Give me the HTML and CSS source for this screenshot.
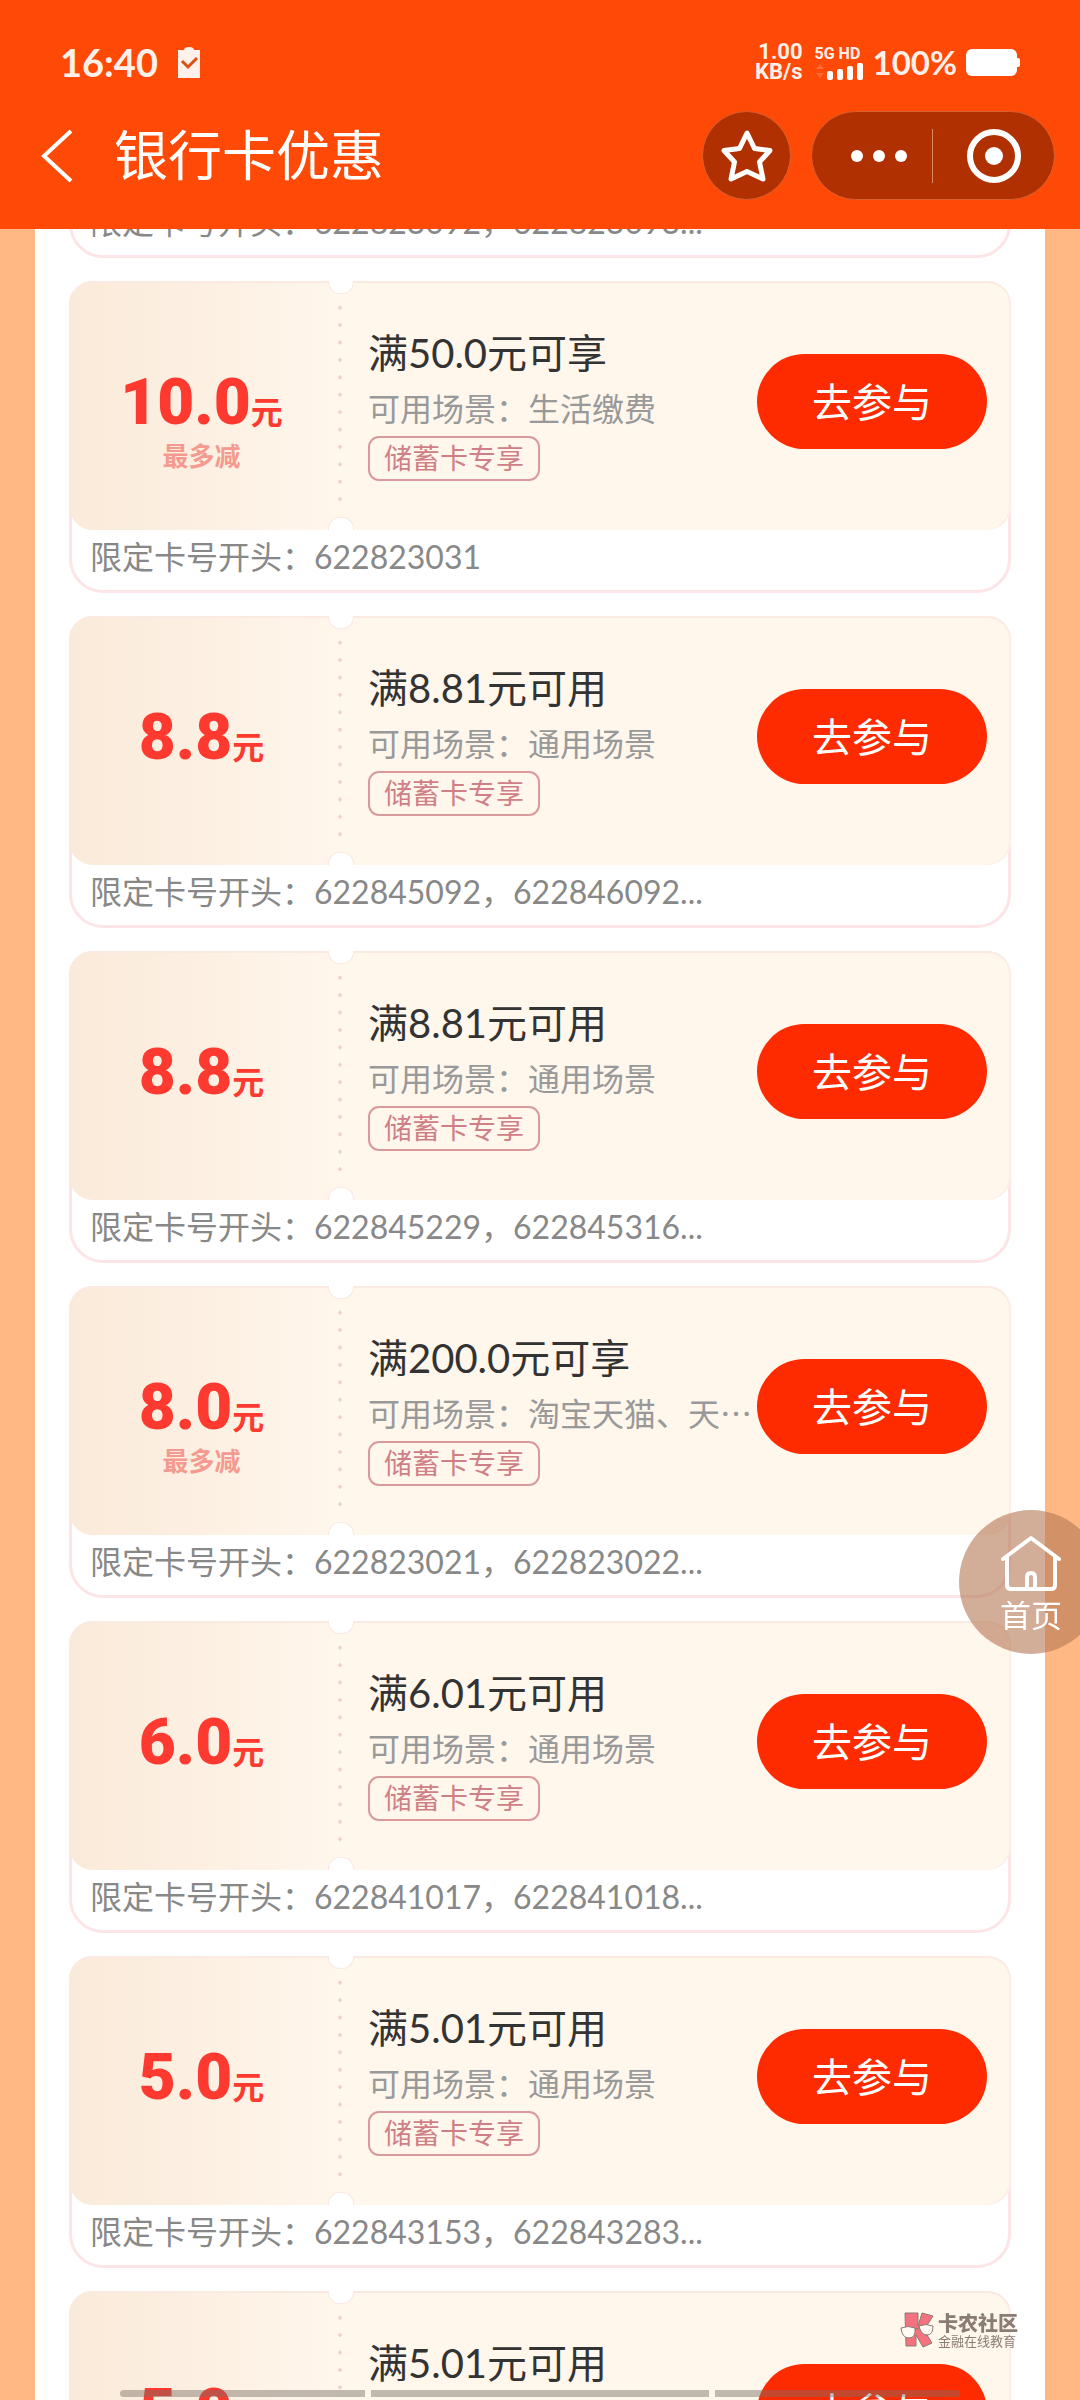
FILE: index.html
```html
<!DOCTYPE html>
<html lang="zh-CN">
<head>
    <meta charset="UTF-8">
    <meta name="viewport" content="width=device-width, initial-scale=1.0">
    <title>银行卡优惠</title>
    <link rel="stylesheet" href="styles.css">
</head>
<body>
    <header class="header">
        <div class="status">
            <span class="time">16:40</span>
            <svg class="clipboard" width="22" height="31" viewBox="0 0 22 31">
                <path d="M0 3h6c0-2 2-3 5-3s5 1 5 3h6v28H0z" fill="#fff1ea"/>
                <path d="M4 14l6 6 9-9" fill="none" stroke="#d9510f" stroke-width="3"/>
            </svg>
            <div class="speed"><span>1.00</span><span>KB/s</span></div>
            <div class="signal">
                <span>5G HD</span>
                <svg width="48" height="17" viewBox="0 0 48 17">
                    <path d="M1 6l4-5 4 5zM1 10l4 5 4-5z" fill="#ff6a35"/>
                    <g fill="#fff">
                        <rect x="12" y="8" width="6" height="9" rx="2"/>
                        <rect x="22" y="6" width="6" height="11" rx="2"/>
                        <rect x="32" y="3" width="6" height="14" rx="2"/>
                        <rect x="42" y="0" width="6" height="17" rx="2"/>
                    </g>
                </svg>
            </div>
            <span class="percent">100%</span>
            <svg class="battery" width="54" height="27" viewBox="0 0 54 27">
                <rect width="51" height="27" rx="6" fill="#fff"/>
                <rect x="48" y="9" width="6" height="9" rx="2" fill="#fff"/>
            </svg>
        </div>
        <nav class="nav">
            <button class="back" aria-label="返回">
                <svg width="32" height="54" viewBox="0 0 32 54"><path d="M30 2L3 27l27 25" fill="none" stroke="#fff" stroke-width="4"/></svg>
            </button>
            <h1>银行卡优惠</h1>
            <button class="round" aria-label="收藏">
                <svg width="52" height="54" viewBox="0 0 52 54">
                    <path d="M26 4l7.500 15.500L49 21.500 38.500 33l3.500 17-16-7.500L10 50l3.500-17L3 21.500l15.500-2z" fill="none" stroke="#fff" stroke-width="5" stroke-linejoin="round"/>
                </svg>
            </button>
            <div class="capsule">
                <button class="more" aria-label="更多">
                    <svg width="58" height="14" viewBox="0 0 58 14" fill="#fff"><circle cx="7" cy="7" r="6"/><circle cx="29" cy="7" r="6"/><circle cx="51" cy="7" r="6"/></svg>
                </button>
                <button class="close" aria-label="关闭">
                    <svg width="54" height="54" viewBox="0 0 54 54"><circle cx="27" cy="27" r="24" fill="none" stroke="#fff" stroke-width="6"/><circle cx="27" cy="27" r="9" fill="#fff"/></svg>
                </button>
            </div>
        </nav>
    </header>

    <main class="panel">
        <section class="card">
            <p class="limit">限定卡号开头：622823092，622823093...</p>
        </section>

        <section class="card">
            <div class="ticket">
                <div class="amount"><p><b>10.0</b>元</p><small>最多减</small></div>
                <div class="dots"></div>
                <div class="info">
                    <h2>满50.0元可享</h2>
                    <p>可用场景：生活缴费</p>
                    <span class="tag">储蓄卡专享</span>
                </div>
                <button class="join">去参与</button>
            </div>
            <p class="limit">限定卡号开头：622823031</p>
        </section>

        <section class="card">
            <div class="ticket">
                <div class="amount"><p><b>8.8</b>元</p></div>
                <div class="dots"></div>
                <div class="info">
                    <h2>满8.81元可用</h2>
                    <p>可用场景：通用场景</p>
                    <span class="tag">储蓄卡专享</span>
                </div>
                <button class="join">去参与</button>
            </div>
            <p class="limit">限定卡号开头：622845092，622846092...</p>
        </section>

        <section class="card">
            <div class="ticket">
                <div class="amount"><p><b>8.8</b>元</p></div>
                <div class="dots"></div>
                <div class="info">
                    <h2>满8.81元可用</h2>
                    <p>可用场景：通用场景</p>
                    <span class="tag">储蓄卡专享</span>
                </div>
                <button class="join">去参与</button>
            </div>
            <p class="limit">限定卡号开头：622845229，622845316...</p>
        </section>

        <section class="card">
            <div class="ticket">
                <div class="amount"><p><b>8.0</b>元</p><small>最多减</small></div>
                <div class="dots"></div>
                <div class="info">
                    <h2>满200.0元可享</h2>
                    <p>可用场景：淘宝天猫、天…</p>
                    <span class="tag">储蓄卡专享</span>
                </div>
                <button class="join">去参与</button>
            </div>
            <p class="limit">限定卡号开头：622823021，622823022...</p>
        </section>

        <section class="card">
            <div class="ticket">
                <div class="amount"><p><b>6.0</b>元</p></div>
                <div class="dots"></div>
                <div class="info">
                    <h2>满6.01元可用</h2>
                    <p>可用场景：通用场景</p>
                    <span class="tag">储蓄卡专享</span>
                </div>
                <button class="join">去参与</button>
            </div>
            <p class="limit">限定卡号开头：622841017，622841018...</p>
        </section>

        <section class="card">
            <div class="ticket">
                <div class="amount"><p><b>5.0</b>元</p></div>
                <div class="dots"></div>
                <div class="info">
                    <h2>满5.01元可用</h2>
                    <p>可用场景：通用场景</p>
                    <span class="tag">储蓄卡专享</span>
                </div>
                <button class="join">去参与</button>
            </div>
            <p class="limit">限定卡号开头：622843153，622843283...</p>
        </section>

        <section class="card">
            <div class="ticket">
                <div class="amount"><p><b>5.0</b>元</p></div>
                <div class="dots"></div>
                <div class="info">
                    <h2>满5.01元可用</h2>
                </div>
                <button class="join">去参与</button>
            </div>
        </section>
    </main>

    <a class="home" href="#">
        <svg width="60" height="56" viewBox="0 0 60 56" fill="none" stroke="#fff" stroke-width="4" stroke-linecap="round" stroke-linejoin="round">
            <path d="M2 24L30 3l28 21"/>
            <path d="M6 22v28q0 4 4 4h40q4 0 4-4V22"/>
            <path d="M26 53V42q0-4 4-4t4 4v11"/>
        </svg>
        <span>首页</span>
    </a>

    <div class="watermark">
        <svg width="34" height="36" viewBox="0 0 34 36" stroke="#8a7a72" stroke-width="1">
            <path d="M5 1h13v13l4-13 11 3-9 14 8 13-9 4-7-12v11H6z" fill="#f4727f"/>
            <path d="M1 16q7-3 14 0 1 10-6 10T1 16zM19 14q7-3 14 0 0 9-6 9t-8-9z" fill="#fffaf3"/>
            <path d="M15 17l4-1" fill="none"/>
        </svg>
        <div>
            <strong>卡农社区</strong>
            <span>金融在线教育</span>
        </div>
    </div>

    <div class="gesture"><i></i><i></i><i></i></div>
</body>
</html>
```

FILE: styles.css
```css
* {
    box-sizing: border-box;
}
body {
    margin: 0;
    height: 100vh;
    display: flex;
    flex-direction: column;
    overflow: hidden;
    background: #ffb884;
    font-family: Lato, "Noto Sans CJK SC", sans-serif;
}
h1, h2, p {
    margin: 0;
    font-weight: normal;
}
button {
    border: none;
    padding: 0;
    background: none;
    color: inherit;
    font-family: inherit;
    cursor: pointer;
}
svg {
    display: block;
    flex: none;
}

/* header */
.header {
    position: relative;
    z-index: 1;
    flex: none;
    height: 229px;
    padding: 42px 25px 0 41px;
    background: #ff4906;
    color: #fff;
}
.status {
    display: flex;
    align-items: center;
    height: 40px;
    padding: 0 35px 0 19px;
    font-weight: bold;
    color: #fff1ea;
}
.time {
    font-size: 38px;
}
.clipboard {
    margin-left: 20px;
}
.speed {
    margin-left: auto;
    display: flex;
    flex-direction: column;
    text-align: right;
    font-family: Roboto, sans-serif;
    font-size: 22px;
    line-height: 20px;
}
.signal {
    margin: 0 10px 0 12px;
    font-family: Roboto, sans-serif;
    font-size: 16px;
    line-height: 18px;
}
.percent {
    font-size: 33px;
}
.battery {
    margin-left: 9px;
}
.nav {
    display: flex;
    align-items: center;
    height: 89px;
    margin-top: 29px;
}
.nav h1 {
    margin: 0 auto 0 41px;
    font-size: 54px;
    line-height: 60px;
}
.round,
.capsule {
    height: 89px;
    border: 1px solid #d9602f;
    border-radius: 45px;
    background: #b03002;
}
.round {
    display: flex;
    align-items: center;
    justify-content: center;
    width: 89px;
    margin-right: 20px;
}
.capsule {
    display: flex;
    align-items: center;
    width: 244px;
}
.capsule button {
    width: 50%;
    height: 54px;
    display: flex;
    align-items: center;
}
.more {
    justify-content: flex-end;
    padding-right: 24px;
    border-right: 1px solid #d98a62;
}
.close {
    justify-content: center;
}

/* coupon list */
.panel {
    flex: 1;
    min-height: 0;
    margin: -37px 35px 0;
    padding: 0 34px;
    background: #fff;
}
.card {
    margin-bottom: 23px;
    border: 3px solid #fde4e6;
    border-radius: 24px 24px 34px 34px;
}
.ticket {
    position: relative;
    display: flex;
    align-items: flex-start;
    height: 249px;
    margin: -3px -3px 0;
    padding-right: 24px;
    border-radius: 24px;
    background: linear-gradient(90deg, #faead9, #fff6ec 270px);
    box-shadow: inset 0 2px #fbeae2, inset -2px 0 #fdeee8;
}
.amount {
    width: 269px;
    padding: 82px 4px 0 0;
    text-align: center;
    font-size: 32px;
    font-weight: bold;
    color: #fe3a30;
}
.amount p {
    font-weight: bold;
    line-height: 80px;
}
.amount b {
    font-family: Roboto, sans-serif;
    font-size: 64px;
}
.amount small {
    display: block;
    margin-top: -12px;
    font-size: 26px;
    line-height: 32px;
    color: #f59a8f;
}
.dots {
    width: 4px;
    height: 209px;
    margin-top: 18px;
    background: radial-gradient(circle, #edd5cd 2px, transparent 2px) 0 0 / 4px 17px round;
}
/* notches on the tear line */
.dots::before,
.dots::after {
    content: "";
    position: absolute;
    left: 259px;
    width: 24px;
    height: 12px;
    border: 1px solid #f8e8e4;
    background: #fff;
}
.dots::before {
    top: 0;
    border-top: none;
    border-radius: 0 0 12px 12px;
}
.dots::after {
    bottom: 0;
    border-bottom: none;
    border-radius: 12px 12px 0 0;
}
.info {
    flex: 1;
    padding: 44px 0 0 26px;
    white-space: nowrap;
}
.info h2 {
    font-size: 40px;
    line-height: 56px;
    color: #333;
}
.info p {
    font-family: "Noto Sans CJK SC", sans-serif;
    font-size: 32px;
    line-height: 52px;
    padding-bottom: 3px;
    color: #999;
}
.tag {
    display: inline-block;
    padding: 0 14px;
    border: 2px solid #d99a9c;
    border-radius: 11px;
    font-size: 28px;
    line-height: 41px;
    color: #cf8086;
}
.join {
    flex: none;
    width: 230px;
    height: 95px;
    margin-top: 73px;
    padding-bottom: 4px;
    border-radius: 48px;
    background: #ff2b00;
    color: #fff;
    font-size: 40px;
}
.limit {
    height: 60px;
    padding-left: 18px;
    font-size: 32px;
    line-height: 54px;
    color: #888;
}

/* floating home link */
.home {
    position: fixed;
    right: -23px;
    top: 1510px;
    width: 144px;
    height: 144px;
    padding-top: 25px;
    border-radius: 50%;
    background: rgba(180, 118, 83, 0.6);
    display: flex;
    flex-direction: column;
    align-items: center;
    color: #fff;
    font-size: 31px;
    line-height: 48px;
    text-decoration: none;
}

.watermark {
    position: fixed;
    right: 62px;
    bottom: 52px;
    display: flex;
    align-items: center;
    gap: 4px;
    color: #8b7c74;
}
.watermark strong,
.watermark span {
    display: block;
}
.watermark strong {
    font-size: 20px;
    font-weight: 900;
    line-height: 22px;
}
.watermark span {
    font-size: 13px;
    line-height: 14px;
}

.gesture {
    position: fixed;
    left: 120px;
    right: 120px;
    bottom: 3px;
    display: flex;
    gap: 6px;
}
.gesture i {
    flex: 245;
    height: 7px;
    background: rgba(120, 110, 100, 0.45);
}
.gesture i:nth-child(2) {
    flex: 338;
}
.gesture i:first-child {
    border-radius: 4px 0 0 4px;
}
.gesture i:last-child {
    border-radius: 0 4px 4px 0;
}
```
